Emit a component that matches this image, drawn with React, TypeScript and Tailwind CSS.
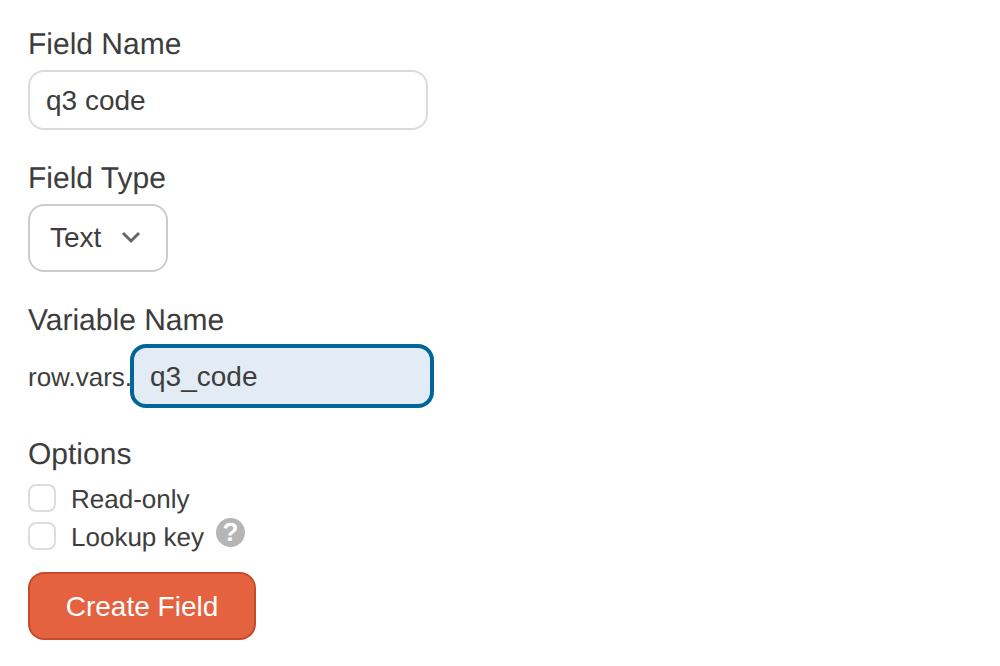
import React from "react";

function Label({ children }: { children: React.ReactNode }) {
  return <div className="h-[40px] pt-[1px] text-[30px] leading-[40px] text-[#3d3d3d]">{children}</div>;
}

function Check({ label, help }: { label: string; help?: boolean }) {
  return (
    <label className="flex items-center h-[38px] text-[26px] text-[#3d3d3d]">
      <input type="checkbox" className="appearance-none w-[28px] h-[28px] bg-white border-2 border-[#dddddd] rounded-[8px]" />
      <span className="ml-[15px] mt-[2px]">{label}</span>
      {help && (
        <span className="ml-[12px] -mt-[8px] w-[29px] h-[29px] rounded-full bg-[#b5b5b5] text-white flex items-center justify-center text-[26px] font-bold leading-none">
          ?
        </span>
      )}
    </label>
  );
}

export default function App() {
  return (
    <div className="min-h-[666px] bg-white pl-[28px] pt-[24px] font-['Liberation_Sans',Arial,sans-serif] text-[#3d3d3d] antialiased [text-rendering:geometricPrecision]">
      <Label>Field Name</Label>
      <input
        defaultValue="q3 code"
        className="mt-[6px] block w-[400px] h-[60px] pl-[16px] pr-[16px] pt-[2px] text-[28px] text-[#3d3d3d] bg-white border-2 border-[#dbdbdb] rounded-[16px] outline-none"
      />

      <div className="mt-[28px]">
        <Label>Field Type</Label>
      </div>
      <button className="mt-[6px] flex items-center w-[140px] h-[68px] pl-[20px] text-[28px] text-[#3d3d3d] bg-white border-2 border-[#cccccc] rounded-[16px]">
        Text
        <svg className="ml-[20px] mb-[2px]" width="20" height="14" viewBox="0 0 20 14" fill="none">
          <path d="M2 3l8 8 8-8" stroke="#666666" strokeWidth="3" />
        </svg>
      </button>

      <div className="mt-[28px]">
        <Label>Variable Name</Label>
      </div>
      <div className="mt-[4px] flex items-center">
        <span className="text-[26px] mt-[2px]">row.vars.</span>
        <input
          defaultValue="q3_code"
          className="-ml-[2px] w-[304px] h-[64px] pl-[16px] pr-[16px] pt-[2px] text-[28px] text-[#3d3d3d] bg-[#e3ebf5] border-4 border-[#006699] rounded-[16px] outline-none"
        />
      </div>

      <div className="mt-[26px]">
        <Label>Options</Label>
      </div>
      <div className="mt-[5px]">
        <Check label="Read-only" />
        <Check label="Lookup key" help />
      </div>

      <button className="mt-[17px] block w-[228px] h-[68px] pt-[2px] text-[28px] text-white bg-[#e46240] border-2 border-[#c64b2b] rounded-[16px]">
        Create Field
      </button>
    </div>
  );
}
